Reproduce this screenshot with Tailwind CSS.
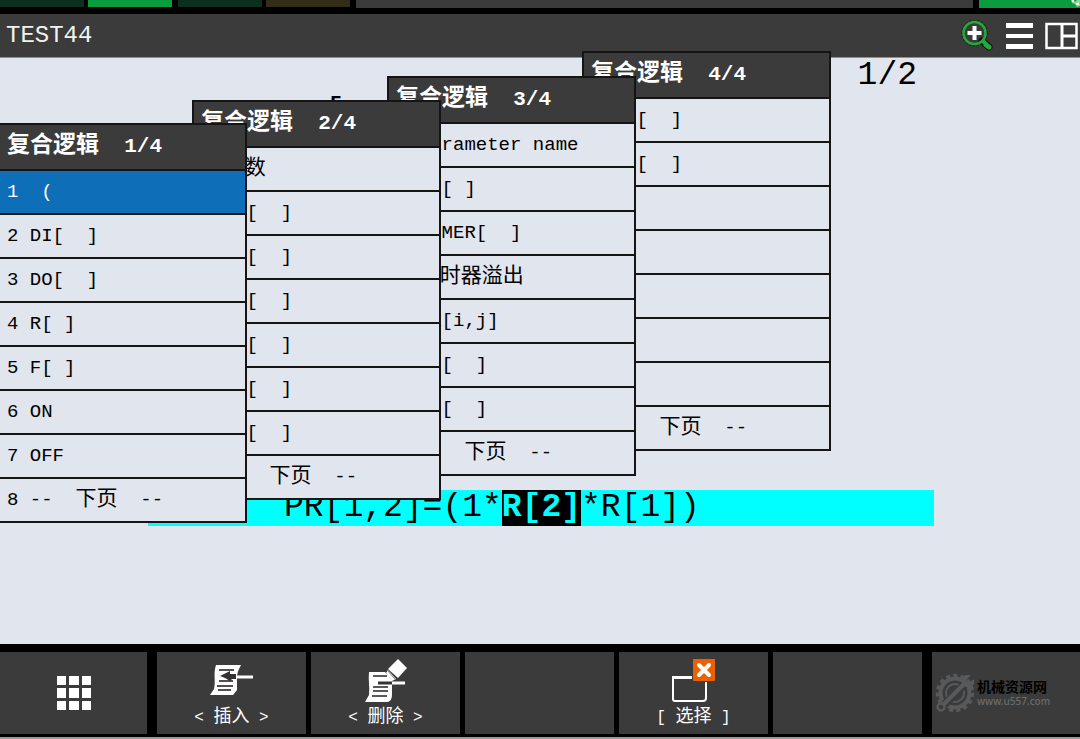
<!DOCTYPE html>
<html lang="zh-CN">
<head>
    <meta charset="UTF-8">
    <meta name="viewport" content="width=device-width, initial-scale=1.0">
    <title>TEST44</title>
    <script src="https://cdn.jsdelivr.net/npm/@tailwindcss/browser@4"></script>
    <style>
        body { font-family: 'Liberation Mono', 'Noto Sans CJK SC', monospace; }
    </style>
</head>
<body class="bg-black min-h-screen flex flex-col overflow-x-hidden">

    <!-- Status strip -->
    <div class="flex h-[14px] items-start">
        <div class="w-[84px] h-[7px] bg-[#0b301e] mr-1"></div>
        <div class="w-[84px] h-[7px] bg-[#0a9c3f] mr-1.5"></div>
        <div class="w-[84px] h-[7px] bg-[#0b301e] mr-1"></div>
        <div class="w-[84px] h-[7px] bg-[#332d18] mr-1.5"></div>
        <div class="flex-1 h-2 bg-[#3b3b3b] mr-1.5"></div>
        <div class="w-[101px] h-2 bg-[#0a9c3f] flex justify-end">
            <svg class="w-2.5 h-2" viewBox="0 0 10 8"><path d="M1 0h3l1 2 2-2h3v6l-3 1-2-3-3-1z" fill="#8fd6a0"/><path d="M2 0h2v2H2zM6 3h3v2H6z" fill="#f4f7d0"/></svg>
        </div>
    </div>

    <!-- Title bar -->
    <header class="flex items-center justify-between h-11 bg-[#3b3b3b] border-b border-[#8d8f93] pl-1.5 pr-0.5">
        <h1 class="text-2xl text-[#f0f4f0]">TEST44</h1>
        <div class="flex items-center gap-3">
            <button type="button" aria-label="放大">
                <svg class="w-8 h-8" viewBox="0 0 32 32" fill="none">
                    <path d="M21 21l7 6" stroke="#101010" stroke-width="7" stroke-linecap="round"/>
                    <circle cx="13.500" cy="13" r="11.500" stroke="#1a2e1c" stroke-width="4" stroke-dasharray="2 1.500"/>
                    <circle cx="13.500" cy="13" r="11" stroke="#22ab38" stroke-width="2.500"/>
                    <path d="M21 20l5 5" stroke="#22ab38" stroke-width="4"/>
                    <path d="M25 25l3 2" stroke="#22ab38" stroke-width="5" stroke-linecap="round"/>
                    <path d="M13.500 6v14M6.500 13h14" stroke="#fff" stroke-width="4"/>
                </svg>
            </button>
            <button type="button" aria-label="菜单">
                <svg class="w-7 h-7" viewBox="0 0 28 28" fill="#fff"><path d="M1 1h27v5H1zM1 12h27v4H1zM1 22h27v5H1z"/></svg>
            </button>
            <button type="button" aria-label="分屏">
                <svg class="w-[33px] h-7" viewBox="0 0 33 28" fill="none" stroke="#fff"><path d="M1.500 2h30v24h-30z" stroke-width="2.500"/><path d="M17 2v24M17 14h15" stroke-width="3"/></svg>
            </button>
        </div>
    </header>

    <!-- Program editor -->
    <main class="relative flex-1 bg-[#e1e5ed] text-black text-[33px] leading-9 whitespace-pre pb-[118px]"><div class="flex justify-end pr-[163px]">1/2</div><div class="pl-[325px]">[</div><div class="mt-[360px] ml-[148px] mr-[146px] pl-[136px] bg-[#00ffff]">PR[1,2]=(1*<mark class="inline-block bg-black text-[#00ffff] font-bold">R[2]</mark>*R[1])</div><div id="menus"></div></main>

    <!-- Function keys -->
    <footer class="flex gap-2.5 h-[95px] pt-2 pb-[3px] border-b-2 border-[#9a9a9a] text-white text-base">
        <button type="button" aria-label="应用" class="w-[147px] bg-[#3b3b3b] flex items-center justify-center">
            <svg class="w-[34px] h-[34px]" viewBox="0 0 34 34" fill="#fff"><path d="M0 0h9v9H0zM12 0h10v9H12zM25 0h9v9h-9zM0 12h9v10H0zM12 12h10v10H12zM25 12h9v10h-9zM0 25h9v9H0zM12 25h10v9H12zM25 25h9v9h-9z"/></svg>
        </button>
        <div class="flex-1 grid grid-cols-5 gap-[5px]">
            <button type="button" class="bg-[#3b3b3b] flex flex-col items-center justify-end pb-0.5">
                <svg class="w-11 h-11" viewBox="0 0 44 44">
                    <path d="M6 6h25l-2 4c-2 4-2 7-2 12v9l-4 5H0l4-6c2-8-1-15 2-24z" fill="#fff"/>
                    <path d="M9 11h15M9 22h14M7 27h16M8 31h13" stroke="#55504f" stroke-width="2"/>
                    <path d="M10 17l10-5v3h6v5h-4l-2 2-5-3z" fill="#333"/>
                    <path d="M26 18h17" stroke="#fff" stroke-width="3"/>
                </svg>
                <span class="whitespace-pre leading-7">&lt; <span class="text-lg leading-7">插入</span> &gt;</span>
            </button>
            <button type="button" class="bg-[#3b3b3b] flex flex-col items-center justify-end pb-0.5">
                <svg class="w-11 h-11" viewBox="0 0 44 44">
                    <path d="M5 13h16l7 8v14c0 4-1 8-5 8H1l4-7c1-8-1-15 0-23z" fill="#fff"/>
                    <path d="M9 17h14M9 28h15M9 32h15M8 37h15" stroke="#5f5857" stroke-width="2"/>
                    <path d="M14 24h14" stroke="#333" stroke-width="3"/>
                    <path d="M28 24h13" stroke="#fff" stroke-width="3"/>
                    <path d="M34 0l9 9-9 10-10-9z" fill="#fff"/>
                    <path d="M24 11l8 9-4 2-6-8z" fill="#fff"/>
                    <path d="M23 11l8 9" stroke="#777" stroke-width="1"/>
                </svg>
                <span class="whitespace-pre leading-7">&lt; <span class="text-lg leading-7">删除</span> &gt;</span>
            </button>
            <button type="button" aria-label="F3" class="bg-[#3b3b3b]"></button>
            <button type="button" class="bg-[#3b3b3b] flex flex-col items-center justify-end pb-0.5">
                <svg class="w-11 h-11" viewBox="0 0 44 44">
                    <path d="M20 18H1v22q0 2 2 2h28q3 0 3-3V23" fill="none" stroke="#fff" stroke-width="2"/>
                    <path d="M0 17h20v3H0z" fill="#fff"/>
                    <rect x="21" y="0" width="22" height="22" rx="1" fill="#eb6100"/>
                    <path d="M27 6l10 10M37 6L27 16" stroke="#fff" stroke-width="4" stroke-linecap="round"/>
                </svg>
                <span class="whitespace-pre leading-7">[ <span class="text-lg leading-7">选择</span> ]</span>
            </button>
            <button type="button" aria-label="F5" class="bg-[#3b3b3b]"></button>
        </div>
        <div class="w-[148px] bg-[#3b3b3b] flex items-center pl-[3px] gap-0.5">
            <svg class="w-10 h-10" viewBox="0 0 40 40" fill="none" stroke="#58595b">
                <circle cx="20" cy="20" r="17.500" stroke-width="3.500" stroke-dasharray="4 3.300"/>
                <circle cx="20" cy="20" r="14.500" stroke-width="4"/>
                <circle cx="20" cy="20" r="9" stroke-width="2"/>
                <path d="M7 34L32 9" stroke="#3b3b3b" stroke-width="8"/>
                <path d="M8 32L31 9" stroke-width="4"/>
                <circle cx="6" cy="34" r="3.500" fill="#3b3b3b" stroke-width="2.500"/>
                <path d="M36 2l-5 5 2 3 6-4v5l-5 4-6-2-2-5 4-6z" fill="#58595b" stroke="none"/>
            </svg>
            <div class="flex flex-col">
                <span class="text-sm leading-4 font-bold text-black font-['Noto_Sans_CJK_SC',sans-serif]">机械资源网</span>
                <a href="#" class="text-[10px] leading-[14px] font-medium text-[#6a6b6d] font-['Noto_Sans',sans-serif]">www.u557.com</a>
            </div>
        </div>
    </footer>

    <script>
        // Pages of the logic menu, last page first so that page 1 ends up on top
        const pages = [
            { no: 4, pos: "left-[582px] -top-[7px]", items: ["SI[  ]", "SO[  ]", "", "", "", "", "", "--  下页  --"] },
            { no: 3, pos: "left-[387px] top-[18px]", items: ["Parameter name", "VR[ ]", "TIMER[  ]", "定时器溢出", "PR[i,j]", "UI[  ]", "UO[  ]", "--  下页  --"] },
            { no: 2, pos: "left-[192px] top-[42px]", items: ["参数", "AI[  ]", "AO[  ]", "GI[  ]", "GO[  ]", "RI[  ]", "RO[  ]", "--  下页  --"] },
            { no: 1, pos: "-left-0.5 top-[65px]", items: [" (", "DI[  ]", "DO[  ]", "R[ ]", "F[ ]", "ON", "OFF", "--  下页  --"] }
        ];

        // Chinese characters are two columns wide
        function wide(text) {
            return text.replace(/[\u4e00-\u9fff]+/g, '<span class="text-[21px] leading-none">$&</span>');
        }

        function renderMenu(page) {
            const rows = page.items.map((item, i) => {
                const selected = page.no === 1 && i === 0;
                const color = selected ? "bg-[#0f6eb8] text-white" : "bg-[#e1e5ed] text-black";
                return `<li><button type="button" class="flex items-center w-full h-11 pl-[7px] border-b-2 border-[#151515] ${color}"><span>${i + 1} ${wide(item)}</span></button></li>`;
            }).join("");

            return `<section class="absolute ${page.pos} w-[249px] border-t-2 border-x-2 border-[#151515] text-[19px] leading-6">` +
                `<h2 class="flex items-center h-[46px] pl-[7px] bg-[#3b3b3b] border-b-2 border-[#151515] text-white text-[21px] font-bold"><span><span class="text-[23px] leading-none">复合逻辑</span>  ${page.no}/4</span></h2>` +
                `<ul>${rows}</ul></section>`;
        }

        document.getElementById("menus").innerHTML = pages.map(renderMenu).join("");
    </script>
</body>
</html>
